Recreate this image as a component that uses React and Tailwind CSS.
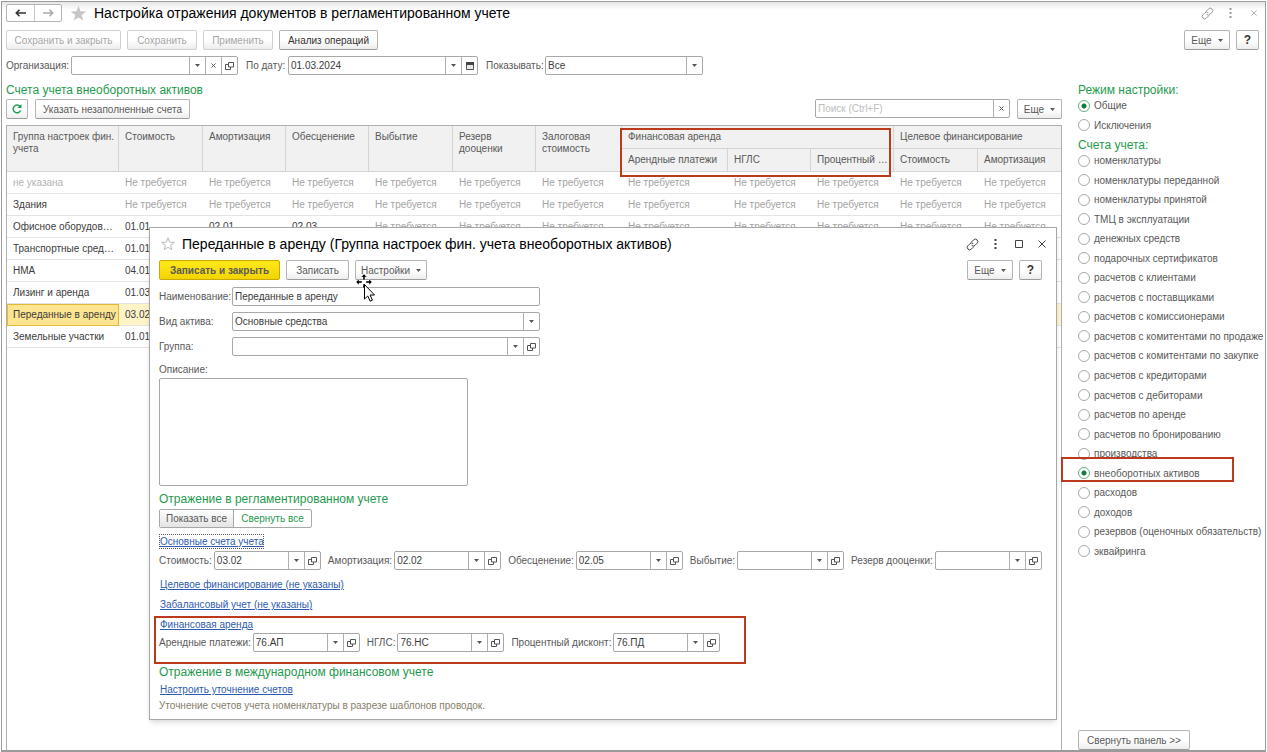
import React, { useState } from 'react';
import clsx from 'clsx';

const COLUMNS = ['w-[84px]', 'w-[83px]', 'w-[83px]', 'w-[84px]', 'w-[83px]', 'w-[86px]', 'w-[106px]', 'w-[83px]', 'w-[83px]', 'w-[84px]', 'w-[83px]'];

const NONE = 'Не требуется';
const ALL_NONE = COLUMNS.map(() => NONE);

const ROWS = [
  { name: 'не указана', muted: true, accounts: ALL_NONE },
  { name: 'Здания', accounts: ALL_NONE },
  { name: 'Офисное оборудов…', accounts: ['01.01', '02.01', '02.03', ...ALL_NONE.slice(3)] },
  { name: 'Транспортные сред…', accounts: ['01.01'] },
  { name: 'НМА', accounts: ['04.01'] },
  { name: 'Лизинг и аренда', accounts: ['01.03'] },
  { name: 'Переданные в аренду', selected: true, accounts: ['03.02'] },
  { name: 'Земельные участки', accounts: ['01.01'] },
];

const MODES = ['Общие', 'Исключения'];

const ACCOUNT_TYPES = [
  'номенклатуры',
  'номенклатуры переданной',
  'номенклатуры принятой',
  'ТМЦ в эксплуатации',
  'денежных средств',
  'подарочных сертификатов',
  'расчетов с клиентами',
  'расчетов с поставщиками',
  'расчетов с комиссионерами',
  'расчетов с комитентами по продаже',
  'расчетов с комитентами по закупке',
  'расчетов с кредиторами',
  'расчетов с дебиторами',
  'расчетов по аренде',
  'расчетов по бронированию',
  'производства',
  'внеоборотных активов',
  'расходов',
  'доходов',
  'резервов (оценочных обязательств)',
  'эквайринга',
];

const Caret = () => (
  <svg width="5" height="3" viewBox="0 0 5 3" className="shrink-0" aria-hidden="true">
    <path d="M0 0h5L2.5 3z" fill="currentColor" />
  </svg>
);

const OpenIcon = () => (
  <svg width="9" height="8" viewBox="0 0 9 8" fill="none" stroke="currentColor" aria-hidden="true">
    <path d="M3.500 .5h5v4.500h-5zM3 2.500H.5v5h5V5" />
  </svg>
);

const ClearIcon = () => (
  <svg width="5" height="5" viewBox="0 0 5 5" fill="none" stroke="currentColor" aria-hidden="true">
    <path d="M.5 .5l4 4M4.5 .5l-4 4" />
  </svg>
);

const CalendarIcon = () => (
  <svg width="8" height="8" viewBox="0 0 8 8" aria-hidden="true">
    <path d="M.5 1.5h7v6h-7z" fill="#e8e8e8" stroke="#555" />
    <path d="M0 0h8v3H0z" fill="#444" />
  </svg>
);

const LinkIcon = () => (
  <svg width="13" height="13" viewBox="0 0 13 13" fill="none" stroke="currentColor" strokeLinecap="round" aria-hidden="true">
    <path d="M5.3 4.2L7.6 1.9a2.3 2.3 0 0 1 3.4 0 2.3 2.3 0 0 1 0 3.4L9 7.3a2.3 2.3 0 0 1-3 .3" />
    <path d="M7.7 8.8L5.4 11.1a2.3 2.3 0 0 1-3.4 0 2.3 2.3 0 0 1 0-3.4L4 5.7a2.3 2.3 0 0 1 3-.3" />
  </svg>
);

const DotsIcon = () => (
  <svg width="3" height="10" viewBox="0 0 3 10" fill="currentColor" aria-hidden="true">
    <path d="M.5 0h2v2h-2zM.5 4h2v2h-2zM.5 8h2v2h-2z" />
  </svg>
);

const CloseIcon = ({ size = 8 }) => (
  <svg width={size} height={size} viewBox="0 0 8 8" fill="none" stroke="currentColor" aria-hidden="true">
    <path d="M.5 .5l7 7M7.5 .5l-7 7" />
  </svg>
);

const MaximizeIcon = () => (
  <svg width="8" height="8" viewBox="0 0 8 8" fill="none" stroke="currentColor" aria-hidden="true">
    <path d="M.5 .5h7v7h-7z" />
  </svg>
);

const STAR = 'M8 .8l1.9 5.1 5.4.2-4.3 3.4 1.5 5.2L8 11.7l-4.5 3 1.5-5.2L.7 6.1l5.4-.2z';

const ArrowIcon = ({ flip }) => (
  <svg width="11" height="8" viewBox="0 0 11 8" fill="none" stroke="currentColor" strokeWidth="1.6" className={clsx(flip && 'rotate-180')} aria-hidden="true">
    <path d="M11 4H1.5M4.5 .8L1.3 4l3.2 3.2" />
  </svg>
);

const Button = ({ className, children, ...props }) => (
  <button
    type="button"
    className={clsx(
      'flex h-5 shrink-0 items-center justify-center whitespace-nowrap rounded-xs border border-[#b4b4b4] border-b-[#9c9c9c] bg-linear-to-b from-white from-50% to-[#ededed] disabled:border-[#d0d0d0] disabled:text-[#a6a6a6]',
      className
    )}
    {...props}
  >
    {children}
  </button>
);

const WindowButton = ({ label, children }) => (
  <button type="button" aria-label={label} className="flex h-5 w-[23px] items-center justify-center">
    {children}
  </button>
);

const AddOn = ({ label, children }) => (
  <button type="button" aria-label={label} className="flex w-4 shrink-0 items-center justify-center border-l border-[#b0b0b0] text-[#555]">
    {children}
  </button>
);

const FRAME = 'flex h-[19px] shrink-0 rounded-xs border border-[#a8a8a8] bg-white text-[#3c3c3c]';

const Field = ({ id, className, inputClass, children, ...props }) => (
  <div className={clsx(FRAME, className)}>
    <input id={id} type="text" className={clsx('min-w-0 flex-1 px-0.5 outline-none', inputClass)} {...props} />
    {children}
  </div>
);

const SelectField = ({ id, className, value }) => (
  <div className={clsx(FRAME, className)}>
    <select id={id} className="min-w-0 flex-1 appearance-none px-0.5 outline-none" defaultValue={value}>
      <option>{value}</option>
    </select>
    <AddOn label="Открыть список">
      <Caret />
    </AddOn>
  </div>
);

const AccountField = ({ id, label, value }) => (
  <div className="flex items-center gap-0.5">
    <label htmlFor={id} className="whitespace-nowrap">{label}:</label>
    <Field id={id} defaultValue={value} className="w-[107px]">
      <AddOn label="Выбрать"><Caret /></AddOn>
      <AddOn label="Открыть"><OpenIcon /></AddOn>
    </Field>
  </div>
);

const RadioGroup = ({ name, items, value, onChange, className }) => (
  <div role="radiogroup" className={clsx('grid auto-rows-fr', className)}>
    {items.map((item) => (
      <label key={item} className="relative flex items-center gap-1 whitespace-nowrap">
        <input
          type="radio"
          name={name}
          checked={value === item}
          onChange={() => onChange(item)}
          className="size-3 shrink-0 appearance-none rounded-full border border-[#a8a8a8] bg-white checked:border-[#5fb583] checked:bg-[radial-gradient(circle,#117a3c_2px,transparent_3px)]"
        />
        {item}
        {item === 'внеоборотных активов' && (
          <span className="pointer-events-none absolute -left-[17px] -top-1.5 h-[25px] w-[173px] border-2 border-[#bb3a1c]" />
        )}
      </label>
    ))}
  </div>
);

const SectionLink = ({ className, children }) => (
  <a href="#" className={clsx('flex h-[15px] w-fit items-center pl-px text-[#2f5bb0] underline underline-offset-1', className)}>
    {children}
  </a>
);

const TH = 'border-b border-r border-[#d4d4d4] pl-1.5 pt-[5px] text-left align-top font-normal last:border-r-0';
const SUB = 'whitespace-nowrap border-r border-b border-[#d4d4d4] pl-1.5 text-left font-normal last:border-r-0';

const AccountsTable = () => (
  <table className="w-full table-fixed border-separate border-spacing-0 leading-3">
    <colgroup>
      <col className="w-[112px]" />
      {COLUMNS.map((width, i) => (
        <col key={i} className={width} />
      ))}
    </colgroup>
    <thead className="bg-[#f1f1f1] text-[#595959]">
      <tr className="h-[23px]">
        <th rowSpan={2} className={TH}>Группа настроек фин. учета</th>
        <th rowSpan={2} className={TH}>Стоимость</th>
        <th rowSpan={2} className={TH}>Амортизация</th>
        <th rowSpan={2} className={TH}>Обесценение</th>
        <th rowSpan={2} className={TH}>Выбытие</th>
        <th rowSpan={2} className={TH}>Резерв дооценки</th>
        <th rowSpan={2} className={TH}>Залоговая стоимость</th>
        <th colSpan={3} className={clsx(TH, 'relative')}>
          Финансовая аренда
          <span className="pointer-events-none absolute -left-0.5 top-0.5 z-10 h-[49px] w-full border-2 border-[#bb3a1c]" />
        </th>
        <th colSpan={2} className={TH}>Целевое финансирование</th>
      </tr>
      <tr className="h-[23px]">
        <th className={SUB}>Арендные платежи</th>
        <th className={SUB}>НГЛС</th>
        <th className={SUB}>Процентный …</th>
        <th className={SUB}>Стоимость</th>
        <th className={SUB}>Амортизация</th>
      </tr>
    </thead>
    <tbody>
      {ROWS.map((row) => (
        <tr key={row.name} className={clsx('h-[22px]', row.selected && 'bg-[#fff3c8]')}>
          <td
            className={clsx(
              'whitespace-nowrap pl-1.5',
              row.selected ? 'bg-[#ffe590] inset-ring inset-ring-[#e3b93a]' : 'border-b border-[#e4e4e4]',
              row.muted ? 'text-[#b4b4b4]' : 'text-[#3c3c3c]'
            )}
          >
            {row.name}
          </td>
          {COLUMNS.map((_, i) => (
            <td
              key={i}
              className={clsx(
                'whitespace-nowrap border-b border-[#e4e4e4] pl-1.5',
                row.accounts[i] === NONE ? 'text-[#a3a3a3]' : 'text-[#3c3c3c]'
              )}
            >
              {row.accounts[i]}
            </td>
          ))}
        </tr>
      ))}
    </tbody>
  </table>
);

const GroupDialog = () => (
  <section
    role="dialog"
    aria-label="Переданные в аренду"
    className="absolute left-[147px] right-[208px] top-[225px] z-20 border border-[#a8a8a8] bg-white px-[9px] pb-1.5 shadow-md"
  >
    <header className="flex h-8 items-center">
      <svg width="14" height="14" viewBox="0 0 16 16" fill="none" stroke="#b0b0b0" className="ml-0.5 mr-[7px]" aria-hidden="true">
        <path d={STAR} />
      </svg>
      <h2 className="flex-1 truncate text-sm text-black">Переданные в аренду (Группа настроек фин. учета внеоборотных активов)</h2>
      <div className="-mr-1.5 flex items-center text-[#444]">
        <WindowButton label="Ссылка"><LinkIcon /></WindowButton>
        <WindowButton label="Меню"><DotsIcon /></WindowButton>
        <WindowButton label="Развернуть"><MaximizeIcon /></WindowButton>
        <WindowButton label="Закрыть"><CloseIcon /></WindowButton>
      </div>
    </header>

    <div className="flex gap-1.5">
      <button
        type="button"
        className="h-5 w-[121px] whitespace-nowrap rounded-xs border border-[#c9a800] bg-linear-to-b from-[#ffe81a] to-[#f2d500] font-bold"
      >
        Записать и закрыть
      </button>
      <Button className="w-[63px]">Записать</Button>
      <Button className="w-[72px] gap-1.5">Настройки <Caret /></Button>
      <Button className="ml-auto w-[46px] gap-1.5">Еще <Caret /></Button>
      <Button className="mr-[5px] w-[23px] text-xs font-bold text-[#333]">?</Button>
    </div>

    <div className="mt-[7px] grid grid-cols-[73px_308px] items-center gap-y-1.5">
      <label htmlFor="group-name">Наименование:</label>
      <Field id="group-name" defaultValue="Переданные в аренду" />
      <label htmlFor="asset-kind">Вид актива:</label>
      <SelectField id="asset-kind" value="Основные средства" />
      <label htmlFor="parent-group">Группа:</label>
      <Field id="parent-group">
        <AddOn label="Выбрать"><Caret /></AddOn>
        <AddOn label="Открыть"><OpenIcon /></AddOn>
      </Field>
    </div>

    <label htmlFor="description" className="mt-2 block h-3.5 leading-3">Описание:</label>
    <textarea id="description" className="block h-27 w-[309px] resize-none rounded-xs border border-[#a8a8a8] p-0.5 outline-none" />

    <h3 className="mt-[5px] text-xs text-[#1f9a4f]">Отражение в регламентированном учете</h3>
    <div className="mt-0.5 flex h-[19px] w-fit rounded-xs border border-[#a8a8a8]">
      <button type="button" className="w-[74px] border-r border-[#a8a8a8] bg-linear-to-b from-white to-[#e4e4e4]">Показать все</button>
      <button type="button" className="w-[77px] text-[#1f9a4f]">Свернуть все</button>
    </div>

    <SectionLink className="mt-1.5 outline outline-dotted -outline-offset-1 outline-[#555]">Основные счета учета</SectionLink>
    <div className="mt-0.5 flex gap-[7px]">
      <AccountField id="cost" label="Стоимость" value="03.02" />
      <AccountField id="depreciation" label="Амортизация" value="02.02" />
      <AccountField id="impairment" label="Обесценение" value="02.05" />
      <AccountField id="disposal" label="Выбытие" />
      <AccountField id="revaluation" label="Резерв дооценки" />
    </div>

    <SectionLink className="mt-[7px]">Целевое финансирование (не указаны)</SectionLink>
    <SectionLink className="mt-[5px]">Забалансовый учет (не указаны)</SectionLink>

    <div className="relative mt-[5px]">
      <SectionLink>Финансовая аренда</SectionLink>
      <div className="mt-px flex gap-[7px]">
        <AccountField id="rent" label="Арендные платежи" value="76.АП" />
        <AccountField id="ngls" label="НГЛС" value="76.НС" />
        <AccountField id="discount" label="Процентный дисконт" value="76.ПД" />
      </div>
      <span className="pointer-events-none absolute -left-[5px] -top-px h-12 w-[592px] border-2 border-[#bb3a1c]" />
    </div>

    <h3 className="mt-3 text-xs text-[#1f9a4f]">Отражение в международном финансовом учете</h3>
    <SectionLink className="mt-0.5">Настроить уточнение счетов</SectionLink>
    <p className="mt-px h-[15px] text-[#867e6a]">Уточнение счетов учета номенклатуры в разрезе шаблонов проводок.</p>
  </section>
);

const MoveCursor = () => (
  <svg width="22" height="30" viewBox="0 0 22 30" className="pointer-events-none absolute left-[353px] top-[271px] z-30" aria-hidden="true">
    <path d="M9 1l3 3H10v3H8V4H6zM1 9l3-3v2h3v2H4v2zM17 9l-3-3v2h-3v2h3v2zM8 11h2v4H8z" fill="#000" stroke="#fff" strokeWidth=".4" />
    <path d="M9.500 11.500v14.500l3.300-3 2.300 5.200 2.300-1-2.300-5.200h4.400z" fill="#fff" stroke="#000" />
  </svg>
);

const App = () => {
  const [mode, setMode] = useState('Общие');
  const [accountType, setAccountType] = useState('внеоборотных активов');

  return (
    <div className="flex min-h-screen flex-col bg-white p-px pb-0 font-['Liberation_Sans',Arial,sans-serif] text-[10px] leading-[15px] text-[#595959]">
      <div className="relative flex flex-1 flex-col border border-b-2 border-[#9b9b9b] bg-[linear-gradient(to_bottom,#e6e6e6,#fff_8px)]">
        <header className="flex h-[22px] items-center pl-1">
          <div className="flex h-[18px] rounded-xs border border-[#b4b4b4] bg-white">
            <button type="button" aria-label="Назад" className="flex w-7 items-center justify-center border-r border-[#c8c8c8] text-[#333]"><ArrowIcon /></button>
            <button type="button" aria-label="Вперед" className="flex w-[26px] items-center justify-center text-[#aaa]"><ArrowIcon flip /></button>
          </div>
          <svg width="17" height="17" viewBox="0 0 16 16" fill="#c6c6c6" className="ml-2 mr-[7px]" aria-hidden="true">
            <path d={STAR} />
          </svg>
          <h1 className="flex-1 truncate text-sm text-black">Настройка отражения документов в регламентированном учете</h1>
          <div className="flex items-center text-[#999]">
            <WindowButton label="Ссылка"><LinkIcon /></WindowButton>
            <WindowButton label="Меню"><DotsIcon /></WindowButton>
            <WindowButton label="Закрыть"><CloseIcon size={6} /></WindowButton>
          </div>
        </header>

        <div className="mt-1.5 flex gap-1.5 pl-1 pr-1.5">
          <Button disabled className="w-[115px]">Сохранить и закрыть</Button>
          <Button disabled className="w-[70px]">Сохранить</Button>
          <Button disabled className="w-[70px]">Применить</Button>
          <Button className="w-[99px] text-[#333]">Анализ операций</Button>
          <Button className="ml-auto w-[46px] gap-1.5">Еще <Caret /></Button>
          <Button className="w-[23px] text-xs font-bold text-[#333]">?</Button>
        </div>

        <div className="mt-1.5 flex items-center gap-2 pl-1">
          <div className="flex items-center">
            <label htmlFor="organization" className="w-[65px]">Организация:</label>
            <Field id="organization" className="w-[167px]">
              <AddOn label="Выбрать"><Caret /></AddOn>
              <AddOn label="Очистить"><ClearIcon /></AddOn>
              <AddOn label="Открыть"><OpenIcon /></AddOn>
            </Field>
          </div>
          <div className="flex items-center">
            <label htmlFor="as-of" className="w-[42px]">По дату:</label>
            <Field id="as-of" defaultValue="01.03.2024" className="w-[190px]">
              <AddOn label="Выбрать"><Caret /></AddOn>
              <AddOn label="Календарь"><CalendarIcon /></AddOn>
            </Field>
          </div>
          <div className="flex items-center">
            <label htmlFor="show" className="w-[59px]">Показывать:</label>
            <SelectField id="show" value="Все" className="w-[158px]" />
          </div>
        </div>

        <div className="mt-[7px] flex flex-1">
          <main className="flex min-w-0 flex-1 flex-col pl-1">
            <h2 className="text-xs text-[#1f9a4f]">Счета учета внеоборотных активов</h2>
            <div className="mt-px flex gap-[7px]">
              <Button aria-label="Обновить" className="w-[22px] text-[#1f9a4f]">
                <svg width="10" height="10" viewBox="0 0 10 10" fill="none" stroke="currentColor" strokeWidth="1.5" aria-hidden="true">
                  <path d="M8.600 6.500A3.900 3.900 0 1 1 8 2.400" />
                  <path d="M9.500 0v4h-4z" fill="currentColor" stroke="none" />
                </svg>
              </Button>
              <Button className="w-[155px]">Указать незаполненные счета</Button>
              <Field
                type="search"
                aria-label="Поиск"
                placeholder="Поиск (Ctrl+F)"
                className="ml-auto w-[195px]"
                inputClass="placeholder:text-[#bdbdbd]"
              >
                <AddOn label="Очистить"><ClearIcon /></AddOn>
              </Field>
              <Button className="w-[45px] gap-1.5">Еще <Caret /></Button>
            </div>
            <div className="mt-1.5 flex-1 border border-b-0 border-[#b0b0b0] bg-white">
              <AccountsTable />
            </div>
          </main>

          <aside className="flex w-[203px] shrink-0 flex-col items-start pl-4">
            <h2 className="h-3.5 text-xs text-[#1f9a4f]">Режим настройки:</h2>
            <RadioGroup name="mode" items={MODES} value={mode} onChange={setMode} className="h-[39px]" />
            <h2 className="flex h-4 items-end text-xs leading-3 text-[#1f9a4f]">Счета учета:</h2>
            <RadioGroup name="account-type" items={ACCOUNT_TYPES} value={accountType} onChange={setAccountType} className="h-[410px]" />
            <Button className="mt-auto w-[112px]">Свернуть панель &gt;&gt;</Button>
          </aside>
        </div>

        <GroupDialog />
        <MoveCursor />
      </div>
    </div>
  );
};

export default App;
